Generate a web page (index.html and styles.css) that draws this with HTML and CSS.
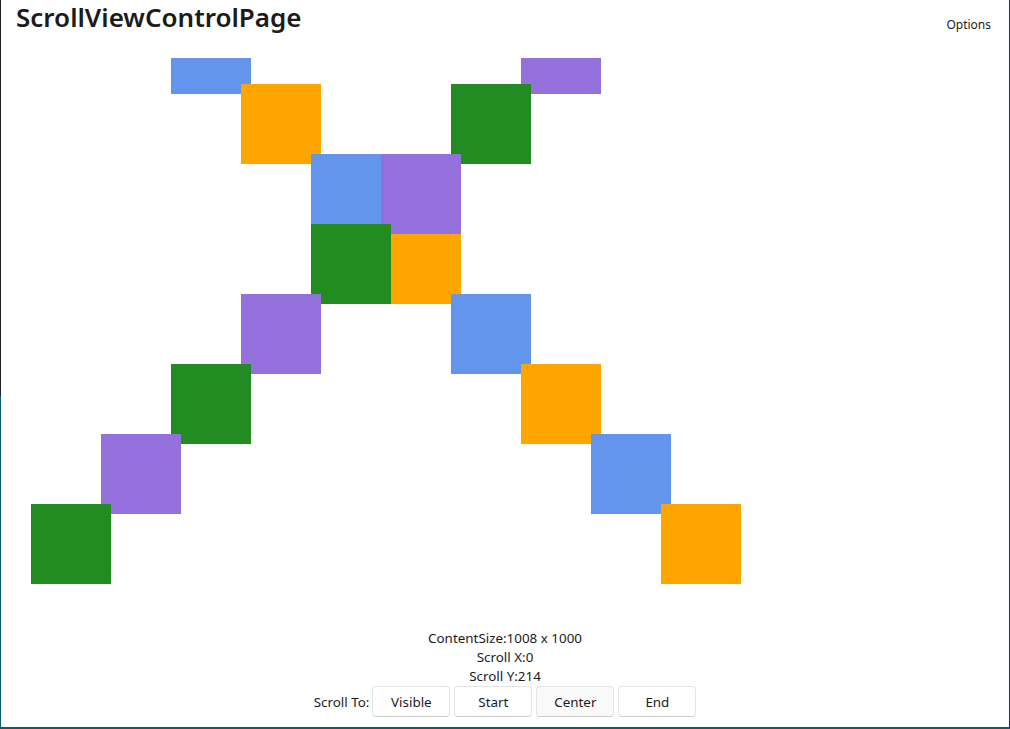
FILE: index.html
```html
<!DOCTYPE html>
<html>
<head>
<meta charset="utf-8">
<link rel="stylesheet" href="styles.css">
</head>
<body>
<div class="frame">
  <div class="edge-left"></div>
  <div class="window">
    <header class="header">
      <h1 class="title">ScrollViewControlPage</h1>
      <span class="options">Options</span>
    </header>
    <div class="viewport">
      <div class="canvas">
        <div class="sq blue" style="left:170px;top:-44px"></div>
        <div class="sq orange" style="left:240px;top:26px"></div>
        <div class="sq blue" style="left:310px;top:96px"></div>
        <div class="sq orange" style="left:380px;top:166px"></div>
        <div class="sq blue" style="left:450px;top:236px"></div>
        <div class="sq orange" style="left:520px;top:306px"></div>
        <div class="sq blue" style="left:590px;top:376px"></div>
        <div class="sq orange" style="left:660px;top:446px"></div>
        <div class="sq purple" style="left:520px;top:-44px"></div>
        <div class="sq green" style="left:450px;top:26px"></div>
        <div class="sq purple" style="left:380px;top:96px"></div>
        <div class="sq green" style="left:310px;top:166px"></div>
        <div class="sq purple" style="left:240px;top:236px"></div>
        <div class="sq green" style="left:170px;top:306px"></div>
        <div class="sq purple" style="left:100px;top:376px"></div>
        <div class="sq green" style="left:30px;top:446px"></div>
      </div>
    </div>
    <footer class="footer">
      <div class="info">ContentSize:1008 x 1000</div>
      <div class="info">Scroll X:0</div>
      <div class="info">Scroll Y:214</div>
      <div class="controls">
        <span class="label">Scroll To:</span>
        <button class="btn">Visible</button>
        <button class="btn">Start</button>
        <button class="btn btn-hover">Center</button>
        <button class="btn">End</button>
      </div>
    </footer>
  </div>
  <div class="edge-right"></div>
</div>
<div class="edge-bottom"></div>
</body>
</html>
```
FILE: styles.css
```css
html, body {
  margin: 0;
  padding: 0;
  width: 1010px;
  height: 729px;
  overflow: hidden;
  background: #0f5a73;
  font-family: "Noto Sans", "Open Sans", sans-serif;
  color: #1b1b1b;
}
.frame {
  display: flex;
  height: 727px;
}
.edge-left {
  width: 1px;
  background: linear-gradient(#1f1f1f 0, #1f1f1f 396px, #0d5e7c 396px);
}
.edge-right {
  width: 1px;
  background: #1b355a;
}
.edge-bottom {
  height: 2px;
  background: #0f5a70;
}
.window {
  flex: 1;
  background: #ffffff;
  display: flex;
  flex-direction: column;
}
.header {
  height: 58px;
  display: flex;
  justify-content: space-between;
  align-items: flex-start;
  flex-shrink: 0;
}
.title {
  margin: 0;
  padding: 0 0 0 15px;
  font-size: 26px;
  font-weight: 600;
  line-height: 34px;
  color: #1b1b1b;
}
.options {
  font-size: 12px;
  line-height: 16px;
  padding: 17px 18px 0 0;
  color: #1b1b1b;
}
.viewport {
  flex: 1;
  position: relative;
  overflow: hidden;
}
.canvas {
  position: absolute;
  left: 0;
  top: 0;
  width: 1008px;
  height: 1000px;
}
.sq {
  position: absolute;
  width: 80px;
  height: 80px;
}
.blue { background: #6495ed; }
.orange { background: #ffa500; }
.purple { background: #9370db; }
.green { background: #228b22; }
.footer {
  flex-shrink: 0;
  display: flex;
  flex-direction: column;
  align-items: center;
  padding-bottom: 10px;
}
.info {
  font-size: 13.4px;
  line-height: 19px;
}
.controls {
  display: flex;
  align-items: center;
  gap: 4px;
}
.label {
  font-size: 13.4px;
  margin-right: -1px;
}
.btn {
  width: 78px;
  height: 31px;
  background: #ffffff;
  border: 1px solid #e5e5e5;
  border-bottom-color: #cccccc;
  border-radius: 4px;
  font-family: inherit;
  font-size: 13.4px;
  color: #1b1b1b;
  padding: 0;
}
.btn-hover {
  background: #f9f9f9;
}
```
